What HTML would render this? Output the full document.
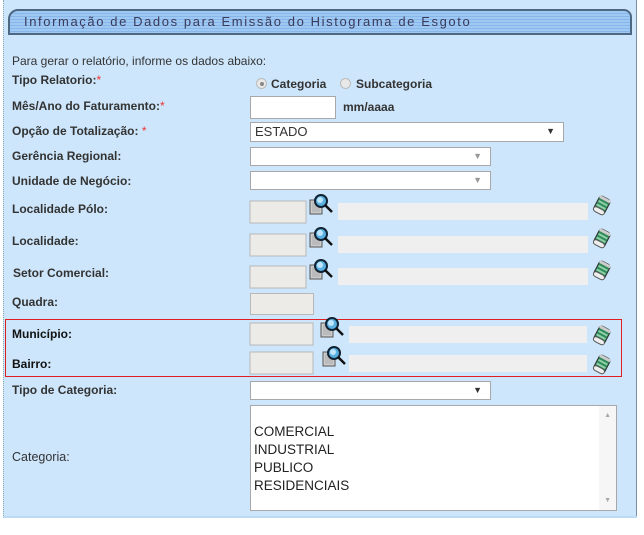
<!DOCTYPE html>
<html><head><meta charset="utf-8"><style>
*{margin:0;padding:0;box-sizing:border-box}
body{width:644px;height:535px;background:#fff;position:relative;overflow:hidden;font-family:"Liberation Sans",Arial,sans-serif;font-size:12px;color:#333}
#panel{position:absolute;left:3px;top:0;width:634px;height:516px;background:#cde6fb;border-left:1px dotted #8aa;border-right:1px solid #7a8ea4}
#bl{position:absolute;left:3px;top:516px;width:634px;height:2px;background:#bcdcf6}
#hdr{position:absolute;left:8px;top:9px;width:624px;height:26px;border:2px solid #4e6883;border-radius:10px 8px 0 0;background:repeating-linear-gradient(#9fc8f2 0 2px,#86b6ea 2px 3px);}
#hdr span{position:absolute;left:14px;top:3px;font-size:13px;letter-spacing:1.6px;color:#3a3a5a}
.a{position:absolute}
.l{position:absolute;left:12px;font-weight:bold;font-size:12px}
.r{color:#e33;font-weight:normal}
.in{position:absolute;background:#fff;border:1px solid #a8a8a8}
.dis{position:absolute;background:#ecebe8;border:1px solid #b8b8b8}
.sel{position:absolute;background:#fff;border:1px solid #a8a8a8;font-size:13px;padding-left:4px;line-height:17px}
.sel i{position:absolute;right:8px;top:0;font-style:normal;font-size:9px}
.sel.g i{color:#999}
.rb{position:absolute;background:#e02020}
</style></head><body>
<div id="panel"></div><div id="bl"></div>
<div id="hdr"><span>Informação de Dados para Emissão do Histograma de Esgoto</span></div>
<div class="a" style="left:12px;top:54px">Para gerar o relatório, informe os dados abaixo:</div>
<div class="l" style="top:73px">Tipo Relatorio:<span class="r">*</span></div>
<div class="a" style="left:256px;top:78px;width:11px;height:11px;border-radius:50%;background:#e8e8e8;border:1px solid #bbb"><div style="position:absolute;left:3px;top:3px;width:4px;height:4px;border-radius:50%;background:#888"></div></div>
<div class="a" style="left:271px;top:77px;font-weight:bold;font-size:12px">Categoria</div>
<div class="a" style="left:340px;top:78px;width:11px;height:11px;border-radius:50%;background:#e8e8e8;border:1px solid #bbb"></div>
<div class="a" style="left:356px;top:77px;font-weight:bold;font-size:12px">Subcategoria</div>
<div class="l" style="top:99px">Mês/Ano do Faturamento:<span class="r">*</span></div>
<div class="in" style="left:250px;top:96px;width:86px;height:23px"></div>
<div class="a" style="left:343px;top:100px;font-weight:bold">mm/aaaa</div>
<div class="l" style="top:124px">Opção de Totalização: <span class="r">*</span></div>
<div class="sel" style="left:250px;top:122px;width:314px;height:20px">ESTADO<i>▼</i></div>
<div class="l" style="top:149px">Gerência Regional:</div>
<div class="sel g" style="left:250px;top:147px;width:241px;height:19px"><i>▼</i></div>
<div class="l" style="top:174px">Unidade de Negócio:</div>
<div class="sel g" style="left:250px;top:171px;width:241px;height:19px"><i>▼</i></div>

<div class="l" style="top:202px">Localidade Pólo:</div>
<div class="l" style="top:234px">Localidade:</div>
<div class="l" style="top:266px;left:13px">Setor Comercial:</div>
<div class="l" style="top:295px">Quadra:</div>
<div class="dis" style="left:250px;top:293px;width:64px;height:22px"></div>

<div class="rb" style="left:5px;top:319px;width:617px;height:1px"></div>
<div class="rb" style="left:5px;top:376px;width:617px;height:1px"></div>
<div class="rb" style="left:5px;top:319px;width:1px;height:58px"></div>
<div class="rb" style="left:621px;top:319px;width:1px;height:58px"></div>
<div class="l" style="top:327px;color:#111">Município:</div>
<div class="l" style="top:357px;color:#111">Bairro:</div>

<div class="l" style="top:383px">Tipo de Categoria:</div>
<div class="sel" style="left:250px;top:381px;width:241px;height:19px"><i>▼</i></div>
<div class="l" style="top:450px;font-weight:normal;font-size:12.5px">Categoria:</div>
<div class="a" style="left:250px;top:405px;width:367px;height:106px;background:#fff;border:1px solid #a8a8a8;font-size:13.5px;line-height:18px;padding:17px 0 0 3px;color:#222">COMERCIAL<br>INDUSTRIAL<br>PUBLICO<br>RESIDENCIAIS
<div style="position:absolute;right:0;top:0;width:17px;height:104px;background:#f6f6f6"></div>
<div style="position:absolute;right:5px;top:6px;font-size:7px;color:#aaa;line-height:7px">▲</div>
<div style="position:absolute;right:5px;bottom:6px;font-size:7px;color:#aaa;line-height:7px">▼</div></div>

<svg class="a" style="left:0;top:0" width="644" height="535">
<defs>
<g id="mag"><rect x="1" y="6" width="12" height="14" fill="#ccc" stroke="#555"/><rect x="3" y="8" width="8" height="10" fill="#bbb"/><circle cx="12" cy="7" r="6" fill="#5ab0e0" stroke="#123" stroke-width="2"/><circle cx="11" cy="6" r="3" fill="#bfe6fa"/><line x1="16" y1="11" x2="23" y2="18" stroke="#111" stroke-width="2.5"/></g>
<g id="era"><g transform="rotate(28 9 10)"><rect x="3" y="2" width="12" height="16" rx="3" fill="#2f8a5a" stroke="#333"/><rect x="3" y="2" width="12" height="3" fill="#ccc"/><rect x="4" y="7" width="10" height="2" fill="#8fd0a8"/><rect x="4" y="11" width="10" height="2" fill="#8fd0a8"/><rect x="3" y="14" width="12" height="5" rx="3" fill="#eee" stroke="#555"/></g></g>
</defs>
<rect x="250" y="201" width="56" height="22" fill="#ecebe8" stroke="#b8b8b8"/><use href="#mag" x="309" y="194"/><rect x="338" y="203" width="250" height="17" fill="#efefef"/><use href="#era" x="593" y="195"/>
<rect x="250" y="234" width="56" height="22" fill="#ecebe8" stroke="#b8b8b8"/><use href="#mag" x="309" y="227"/><rect x="338" y="236" width="250" height="17" fill="#efefef"/><use href="#era" x="593" y="228"/>
<rect x="250" y="266" width="56" height="22" fill="#ecebe8" stroke="#b8b8b8"/><use href="#mag" x="309" y="259"/><rect x="338" y="268" width="250" height="17" fill="#efefef"/><use href="#era" x="593" y="260"/>
<rect x="250" y="323" width="63" height="22" fill="#ecebe8" stroke="#b8b8b8"/><use href="#mag" x="320" y="317"/><rect x="349" y="326" width="238" height="17" fill="#efefef"/><use href="#era" x="593" y="325"/>
<rect x="250" y="352" width="63" height="22" fill="#ecebe8" stroke="#b8b8b8"/><use href="#mag" x="322" y="346"/><rect x="349" y="355" width="238" height="17" fill="#efefef"/><use href="#era" x="593" y="354"/>
</svg>
</body></html>
